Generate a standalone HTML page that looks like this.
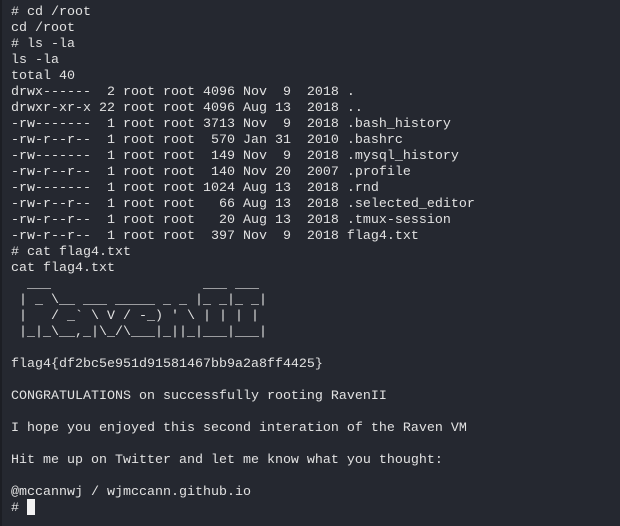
<!DOCTYPE html>
<html><head><meta charset="utf-8"><style>
html,body{margin:0;padding:0;}
body{width:620px;height:526px;background:#252830;overflow:hidden;position:relative;border-left:2px solid #1c1e24;box-sizing:border-box;}
pre{margin:0;position:absolute;left:9px;top:5px;font-family:"Liberation Mono","DejaVu Sans Mono",monospace;font-size:13.33px;line-height:16px;color:#e2e2e2;white-space:pre;}
.cur{display:inline-block;width:8px;height:16px;background:#f2f2f2;vertical-align:top;margin-top:-2px;}
</style></head><body>
<pre># cd /root
cd /root
# ls -la
ls -la
total 40
drwx------  2 root root 4096 Nov  9  2018 .
drwxr-xr-x 22 root root 4096 Aug 13  2018 ..
-rw-------  1 root root 3713 Nov  9  2018 .bash_history
-rw-r--r--  1 root root  570 Jan 31  2010 .bashrc
-rw-------  1 root root  149 Nov  9  2018 .mysql_history
-rw-r--r--  1 root root  140 Nov 20  2007 .profile
-rw-------  1 root root 1024 Aug 13  2018 .rnd
-rw-r--r--  1 root root   66 Aug 13  2018 .selected_editor
-rw-r--r--  1 root root   20 Aug 13  2018 .tmux-session
-rw-r--r--  1 root root  397 Nov  9  2018 flag4.txt
# cat flag4.txt
cat flag4.txt
  ___                   ___ ___
 | _ \__ ___ _____ _ _ |_ _|_ _|
 |   / _` \ V / -_) ' \ | | | |
 |_|_\__,_|\_/\___|_||_|___|___|

flag4{df2bc5e951d91581467bb9a2a8ff4425}

CONGRATULATIONS on successfully rooting RavenII

I hope you enjoyed this second interation of the Raven VM

Hit me up on Twitter and let me know what you thought:

@mccannwj / wjmccann.github.io
# <span class="cur"></span></pre>
</body></html>
